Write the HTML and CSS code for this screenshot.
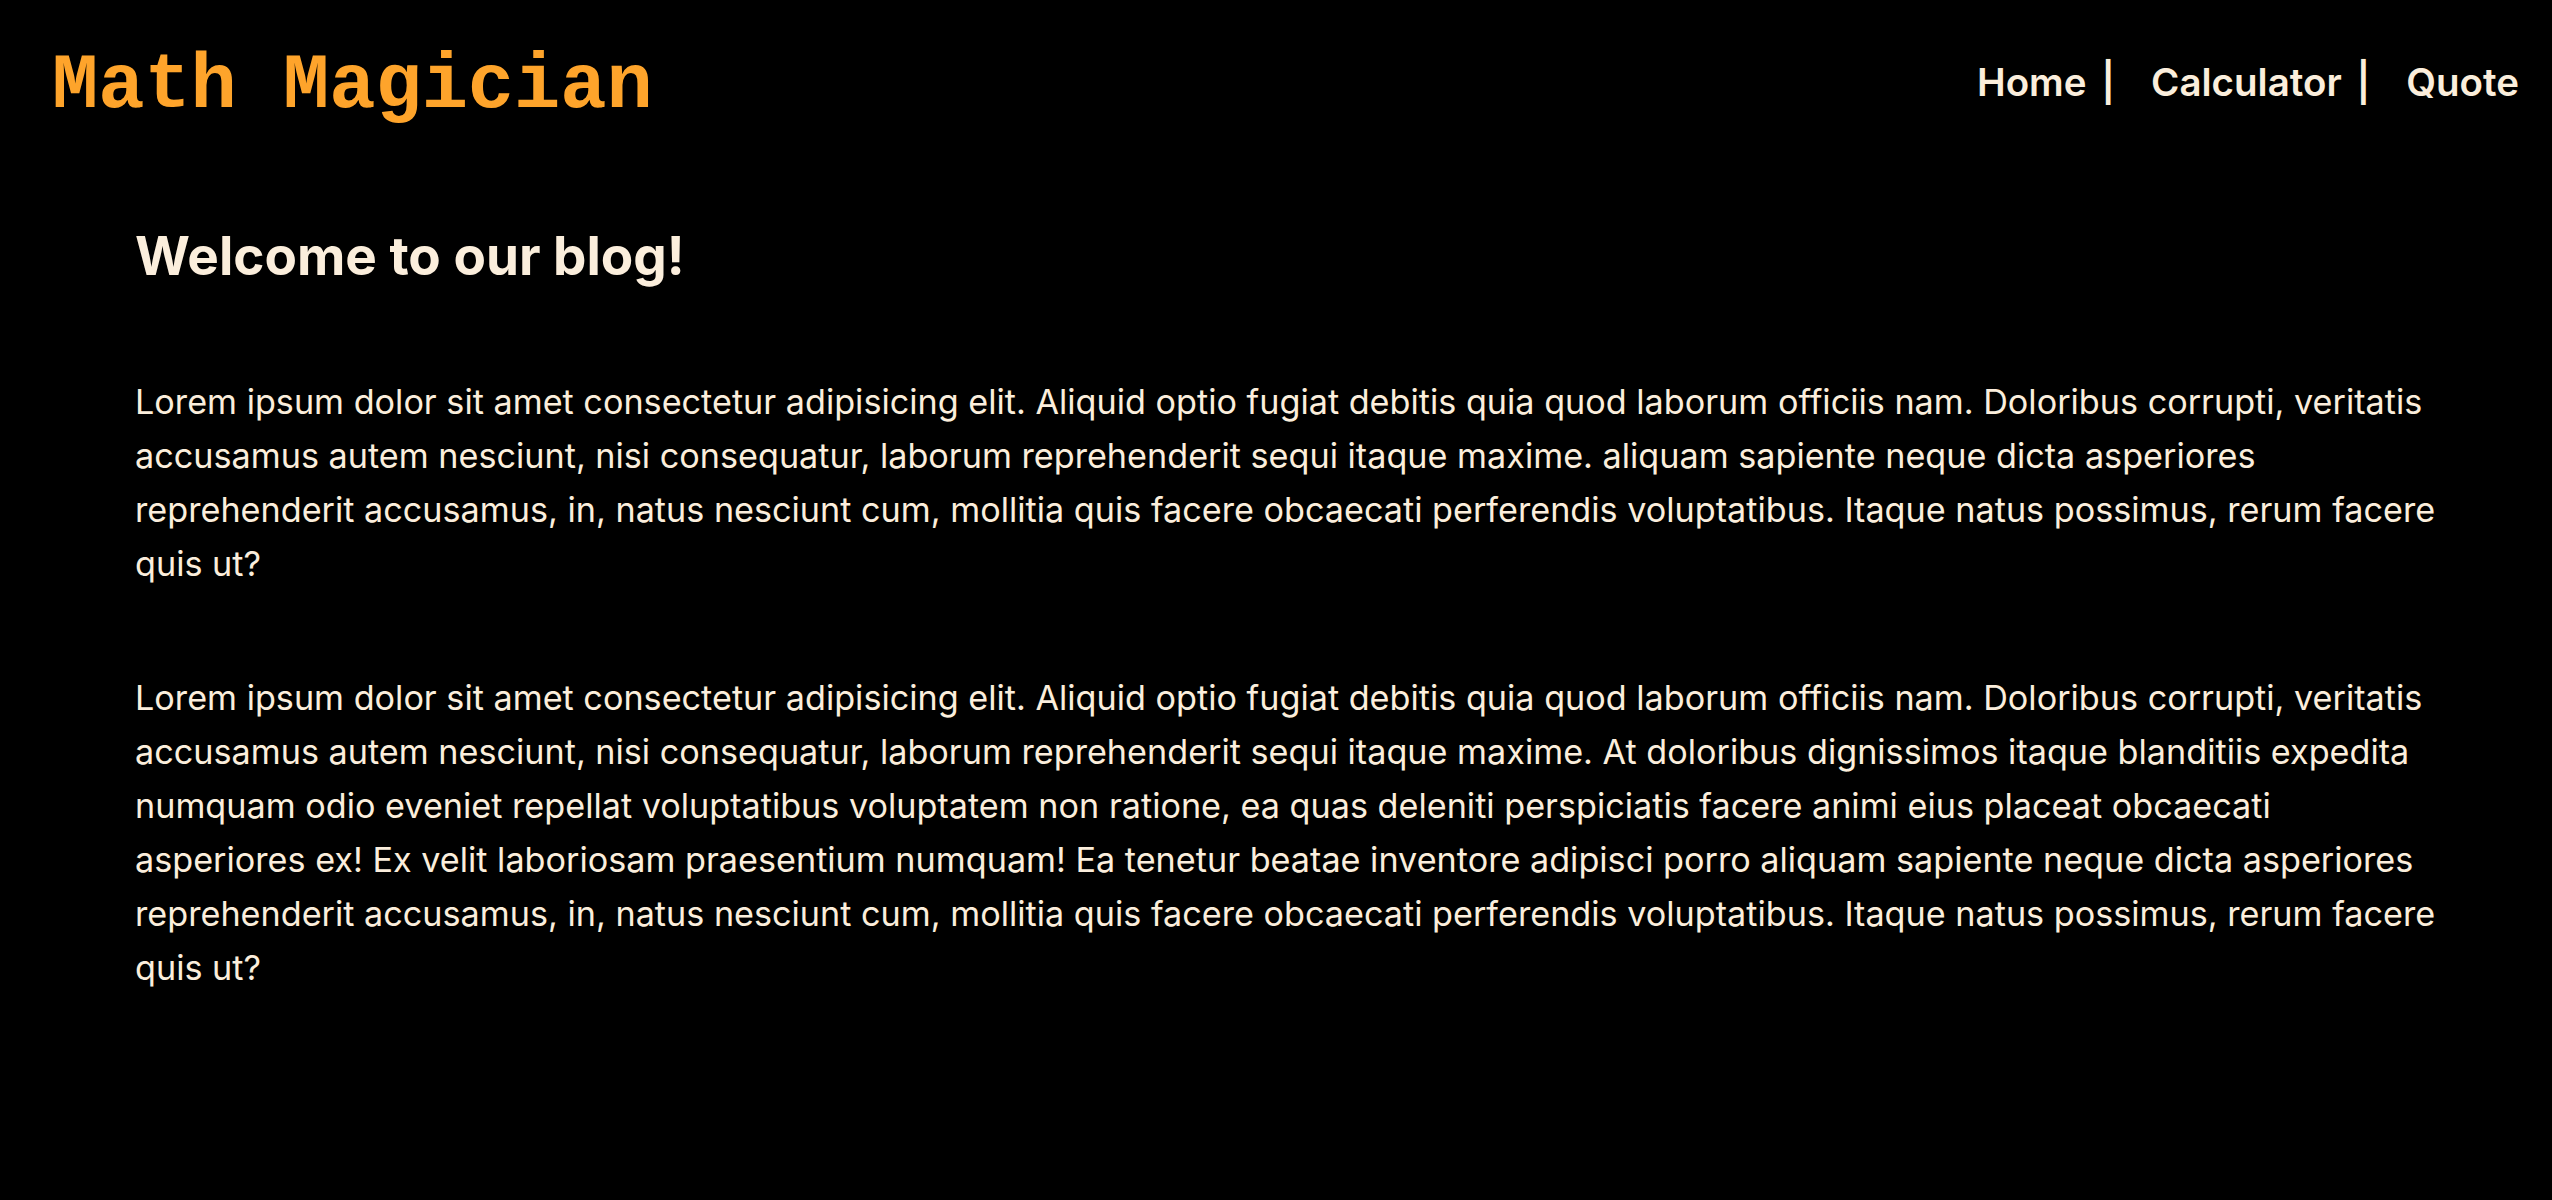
FILE: index.html
```html
<!DOCTYPE html>
<html lang="en">
<head>
<meta charset="utf-8">
<title>Math Magician</title>
<link rel="stylesheet" href="styles.css">
</head>
<body>
<header class="header">
  <h1 class="logo">Math Magician</h1>
  <nav class="nav">
    <a class="nav-link" href="#">Home |</a>
    <a class="nav-link" href="#">Calculator |</a>
    <a class="nav-link" href="#">Quote</a>
  </nav>
</header>
<main class="content">
  <h2 class="title">Welcome to our blog!</h2>
  <p class="text">Lorem ipsum dolor sit amet consectetur adipisicing elit. Aliquid optio fugiat debitis quia quod laborum officiis nam. Doloribus corrupti, veritatis accusamus autem nesciunt, nisi consequatur, laborum reprehenderit sequi itaque maxime. aliquam sapiente neque dicta asperiores reprehenderit accusamus, in, natus nesciunt cum, mollitia quis facere obcaecati perferendis voluptatibus. Itaque natus possimus, rerum facere quis ut?</p>
  <p class="text">Lorem ipsum dolor sit amet consectetur adipisicing elit. Aliquid optio fugiat debitis quia quod laborum officiis nam. Doloribus corrupti, veritatis accusamus autem nesciunt, nisi consequatur, laborum reprehenderit sequi itaque maxime. At doloribus dignissimos itaque blanditiis expedita numquam odio eveniet repellat voluptatibus voluptatem non ratione, ea quas deleniti perspiciatis facere animi eius placeat obcaecati asperiores ex! Ex velit laboriosam praesentium numquam! Ea tenetur beatae inventore adipisci porro aliquam sapiente neque dicta asperiores reprehenderit accusamus, in, natus nesciunt cum, mollitia quis facere obcaecati perferendis voluptatibus. Itaque natus possimus, rerum facere quis ut?</p>
</main>
</body>
</html>
```

FILE: styles.css
```css
html, body {
  margin: 0;
  padding: 0;
  background: #000;
}

body {
  font-family: Inter, "Noto Sans", sans-serif;
  color: #fbeedc;
}

.header {
  display: flex;
  justify-content: space-between;
  align-items: center;
  padding: 48px 33px 0 52px;
}

.logo {
  margin: 0;
  font-family: "Liberation Mono", "Courier New", monospace;
  font-weight: 700;
  font-size: 77px;
  line-height: 1;
  color: #fea42b;
}

.nav {
  display: flex;
  gap: 36px;
  padding-bottom: 10px;
}

.nav-link {
  color: #fbeedc;
  text-decoration: none;
  font-weight: 600;
  font-size: 38.5px;
  word-spacing: 5px;
}

.content {
  padding: 0 110px 0 135px;
}

.title {
  margin: 100px 0 0;
  padding-bottom: 6px;
  font-size: 53px;
  font-weight: 700;
  line-height: 1.2;
}

.text {
  margin: 80px 0 0;
  font-size: 34.2px;
  line-height: 54px;
}
```
